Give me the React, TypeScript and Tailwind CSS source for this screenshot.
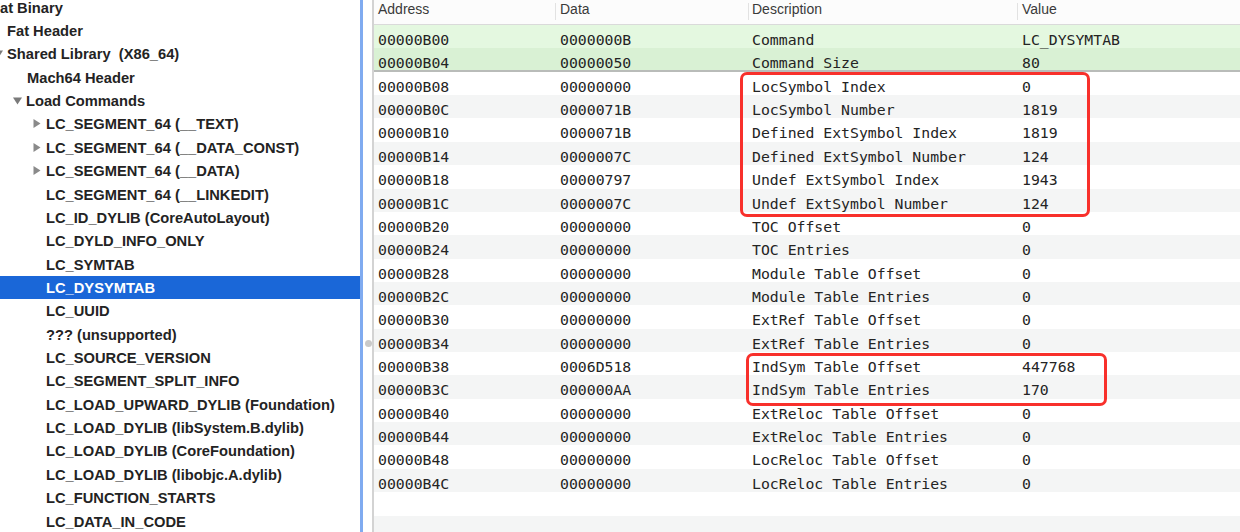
import React from "react";

type TreeRow = {
	label: string;
	offset: string;
	arrow?: "down" | "right";
	selected?: boolean;
};

const treeRows: TreeRow[] = [
	{ label: "Fat Binary", offset: "-ml-[22px]", arrow: "down" },
	{ label: "Fat Header", offset: "-ml-[6px]" },
	{ label: "Shared Library  (X86_64)", offset: "-ml-[6px]", arrow: "down" },
	{ label: "Mach64 Header", offset: "ml-[14px]" },
	{ label: "Load Commands", offset: "ml-[13px]", arrow: "down" },
	{ label: "LC_SEGMENT_64 (__TEXT)", offset: "ml-[33px]", arrow: "right" },
	{ label: "LC_SEGMENT_64 (__DATA_CONST)", offset: "ml-[33px]", arrow: "right" },
	{ label: "LC_SEGMENT_64 (__DATA)", offset: "ml-[33px]", arrow: "right" },
	{ label: "LC_SEGMENT_64 (__LINKEDIT)", offset: "ml-[33px]" },
	{ label: "LC_ID_DYLIB (CoreAutoLayout)", offset: "ml-[33px]" },
	{ label: "LC_DYLD_INFO_ONLY", offset: "ml-[33px]" },
	{ label: "LC_SYMTAB", offset: "ml-[33px]" },
	{ label: "LC_DYSYMTAB", offset: "ml-[33px]", selected: true },
	{ label: "LC_UUID", offset: "ml-[33px]" },
	{ label: "??? (unsupported)", offset: "ml-[33px]" },
	{ label: "LC_SOURCE_VERSION", offset: "ml-[33px]" },
	{ label: "LC_SEGMENT_SPLIT_INFO", offset: "ml-[33px]" },
	{ label: "LC_LOAD_UPWARD_DYLIB (Foundation)", offset: "ml-[33px]" },
	{ label: "LC_LOAD_DYLIB (libSystem.B.dylib)", offset: "ml-[33px]" },
	{ label: "LC_LOAD_DYLIB (CoreFoundation)", offset: "ml-[33px]" },
	{ label: "LC_LOAD_DYLIB (libobjc.A.dylib)", offset: "ml-[33px]" },
	{ label: "LC_FUNCTION_STARTS", offset: "ml-[33px]" },
	{ label: "LC_DATA_IN_CODE", offset: "ml-[33px]" },
];

const dataRows: [string, string, string, string][] = [
	["00000B00", "0000000B", "Command", "LC_DYSYMTAB"],
	["00000B04", "00000050", "Command Size", "80"],
	["00000B08", "00000000", "LocSymbol Index", "0"],
	["00000B0C", "0000071B", "LocSymbol Number", "1819"],
	["00000B10", "0000071B", "Defined ExtSymbol Index", "1819"],
	["00000B14", "0000007C", "Defined ExtSymbol Number", "124"],
	["00000B18", "00000797", "Undef ExtSymbol Index", "1943"],
	["00000B1C", "0000007C", "Undef ExtSymbol Number", "124"],
	["00000B20", "00000000", "TOC Offset", "0"],
	["00000B24", "00000000", "TOC Entries", "0"],
	["00000B28", "00000000", "Module Table Offset", "0"],
	["00000B2C", "00000000", "Module Table Entries", "0"],
	["00000B30", "00000000", "ExtRef Table Offset", "0"],
	["00000B34", "00000000", "ExtRef Table Entries", "0"],
	["00000B38", "0006D518", "IndSym Table Offset", "447768"],
	["00000B3C", "000000AA", "IndSym Table Entries", "170"],
	["00000B40", "00000000", "ExtReloc Table Offset", "0"],
	["00000B44", "00000000", "ExtReloc Table Entries", "0"],
	["00000B48", "00000000", "LocReloc Table Offset", "0"],
	["00000B4C", "00000000", "LocReloc Table Entries", "0"],
];

const Arrow = ({ dir }: { dir: "down" | "right" }) =>
	dir === "down" ? (
		<svg width="9" height="8" viewBox="0 0 9 8">
			<path d="M0 0.5 H9 L4.5 7.5 Z" fill="#7a7a7a" />
		</svg>
	) : (
		<svg width="8" height="9" viewBox="0 0 8 9">
			<path d="M0.5 0 V9 L7.5 4.5 Z" fill="#8a8a8a" />
		</svg>
	);

const Sidebar = () => (
	<div className="w-[360px] shrink-0 bg-white overflow-hidden">
		<div className="-mt-[4.5px]">
			{treeRows.map((row, i) => (
				<div
					key={i}
					className={
						"h-[23.37px] flex items-center whitespace-pre font-bold text-[14.7px] " +
						(row.selected ? "bg-[#1a67d8] text-white" : "text-[#232323]")
					}>
					<div className={"flex items-center shrink-0 " + row.offset}>
						<span className="w-[13px] flex items-center">
							{row.arrow && <Arrow dir={row.arrow} />}
						</span>
						<span className="pt-[1px]">{row.label}</span>
					</div>
				</div>
			))}
		</div>
	</div>
);

const Table = () => (
	<div className="flex-1 border-l-2 border-[#d3d3d3] bg-white relative overflow-hidden">
		{/* header */}
		<div className="h-[25px] grid grid-cols-[181px_193px_269px_1fr] border-b border-[#dadada] bg-[#fcfcfc] font-['Liberation_Sans',Arial,sans-serif] text-[14px] leading-[18px] text-[#3a3a3a]">
			<div className="pl-[4px]">Address</div>
			<div className="pl-[5px] relative">
				<span className="absolute left-0 top-[3px] h-[17px] w-px bg-[#e2e2e2]" />
				Data
			</div>
			<div className="pl-[4px] relative">
				<span className="absolute left-0 top-[3px] h-[17px] w-px bg-[#e2e2e2]" />
				Description
			</div>
			<div className="pl-[5px] relative">
				<span className="absolute left-0 top-[3px] h-[17px] w-px bg-[#e2e2e2]" />
				Value
			</div>
		</div>

		{/* rows */}
		<div className="font-['DejaVu_Sans_Mono',monospace] text-[14.8px] text-[#242424]">
			{dataRows.map((r, i) => {
				let bg = i % 2 === 0 ? "bg-white" : "bg-[#f4f5f5]";
				if (i === 0) bg = "bg-[#e4f8e0]";
				if (i === 1) bg = "bg-[#d9f1d4] border-b-2 border-[#b9bcb9]";
				return (
					<div
						key={r[0]}
						className={"h-[23.37px] grid grid-cols-[181px_193px_269px_1fr] items-center whitespace-pre " + bg}>
						<div className="pl-[4px] pt-[4px]">{r[0]}</div>
						<div className="pl-[5px] pt-[4px]">{r[1]}</div>
						<div className="pl-[4px] pt-[4px]">{r[2]}</div>
						<div className="pl-[5px] pt-[4px]">{r[3]}</div>
					</div>
				);
			})}
			<div className="h-[23.37px] bg-white" />
			<div className="h-[23.37px] bg-[#f4f5f5]" />
		</div>

		{/* red annotation boxes */}
		<div className="absolute left-[366px] top-[72px] w-[350px] h-[145px] border-[3px] border-[#f8302b] rounded-[7px]" />
		<div className="absolute left-[372px] top-[353px] w-[361px] h-[53px] border-[3px] border-[#f8302b] rounded-[7px]" />
	</div>
);

export default function App() {
	return (
		<div className="w-[1240px] h-[532px] flex overflow-hidden bg-white font-['Liberation_Sans',Arial,sans-serif]">
			<Sidebar />
			<div className="w-[3px] shrink-0 bg-[#80abf0]" />
			<div className="w-[9px] shrink-0 bg-white relative">
				<span className="absolute left-[2px] top-[340px] w-[7px] h-[7px] rounded-full bg-[#c9c9c9]" />
			</div>
			<Table />
		</div>
	);
}
